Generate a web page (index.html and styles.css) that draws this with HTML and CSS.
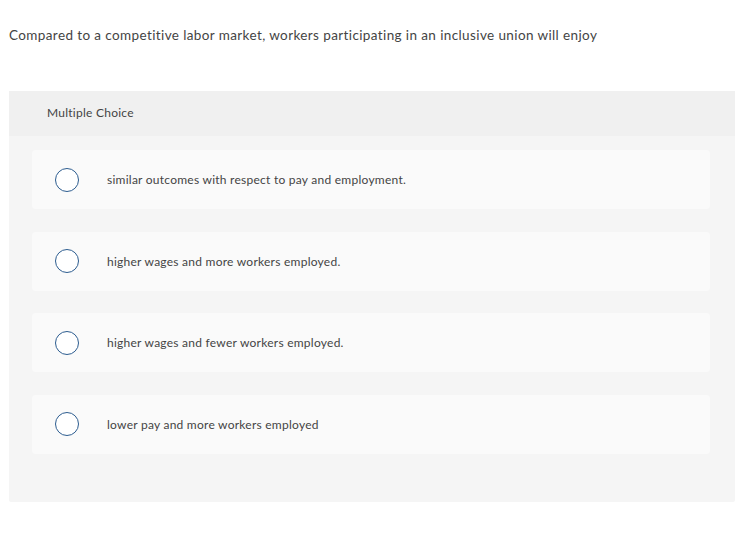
FILE: index.html
```html
<!DOCTYPE html>
<html>
<head>
<meta charset="utf-8">
<link rel="stylesheet" href="styles.css">
</head>
<body>
<div class="question">Compared to a competitive labor market, workers participating in an inclusive union will enjoy</div>
<div class="panel">
  <div class="panel-head">Multiple Choice</div>
  <div class="options">
    <div class="option"><span class="radio"></span><span class="label">similar outcomes with respect to pay and employment.</span></div>
    <div class="option"><span class="radio"></span><span class="label">higher wages and more workers employed.</span></div>
    <div class="option"><span class="radio"></span><span class="label">higher wages and fewer workers employed.</span></div>
    <div class="option"><span class="radio"></span><span class="label">lower pay and more workers employed</span></div>
  </div>
</div>
</body>
</html>
```
FILE: styles.css
```css
html, body { margin: 0; padding: 0; background: #fff; }
body { font-family: Lato, "Liberation Sans", sans-serif; color: #333; }
.question {
  padding: 27px 0 0 9px;
  height: 91px;
  box-sizing: border-box;
  font-size: 13.5px;
  letter-spacing: 0.39px;
  color: #444;
  line-height: 16px;
}
.panel {
  margin-left: 9px;
  width: 726px;
  height: 411px;
  background: #f5f5f5;
  border-radius: 2px;
}
.panel-head {
  height: 45px;
  background: #f0f0f0;
  box-sizing: border-box;
  padding: 15px 0 0 38px;
  font-size: 12px;
  letter-spacing: 0.25px;
  line-height: 14px;
  color: #444;
}
.options {
  padding: 14px 25px 0 23px;
  display: flex;
  flex-direction: column;
  gap: 22.5px;
}
.option {
  height: 59px;
  background: #fafafa;
  border-radius: 4px;
  display: flex;
  align-items: center;
  padding-left: 23px;
}
.radio {
  width: 22px;
  height: 22px;
  border: 1.5px solid #2c5c8f;
  border-radius: 50%;
  background: #fff;
  flex: none;
}
.label {
  margin-left: 28px;
  font-size: 12px;
  letter-spacing: 0.25px;
  color: #444;
}
```
